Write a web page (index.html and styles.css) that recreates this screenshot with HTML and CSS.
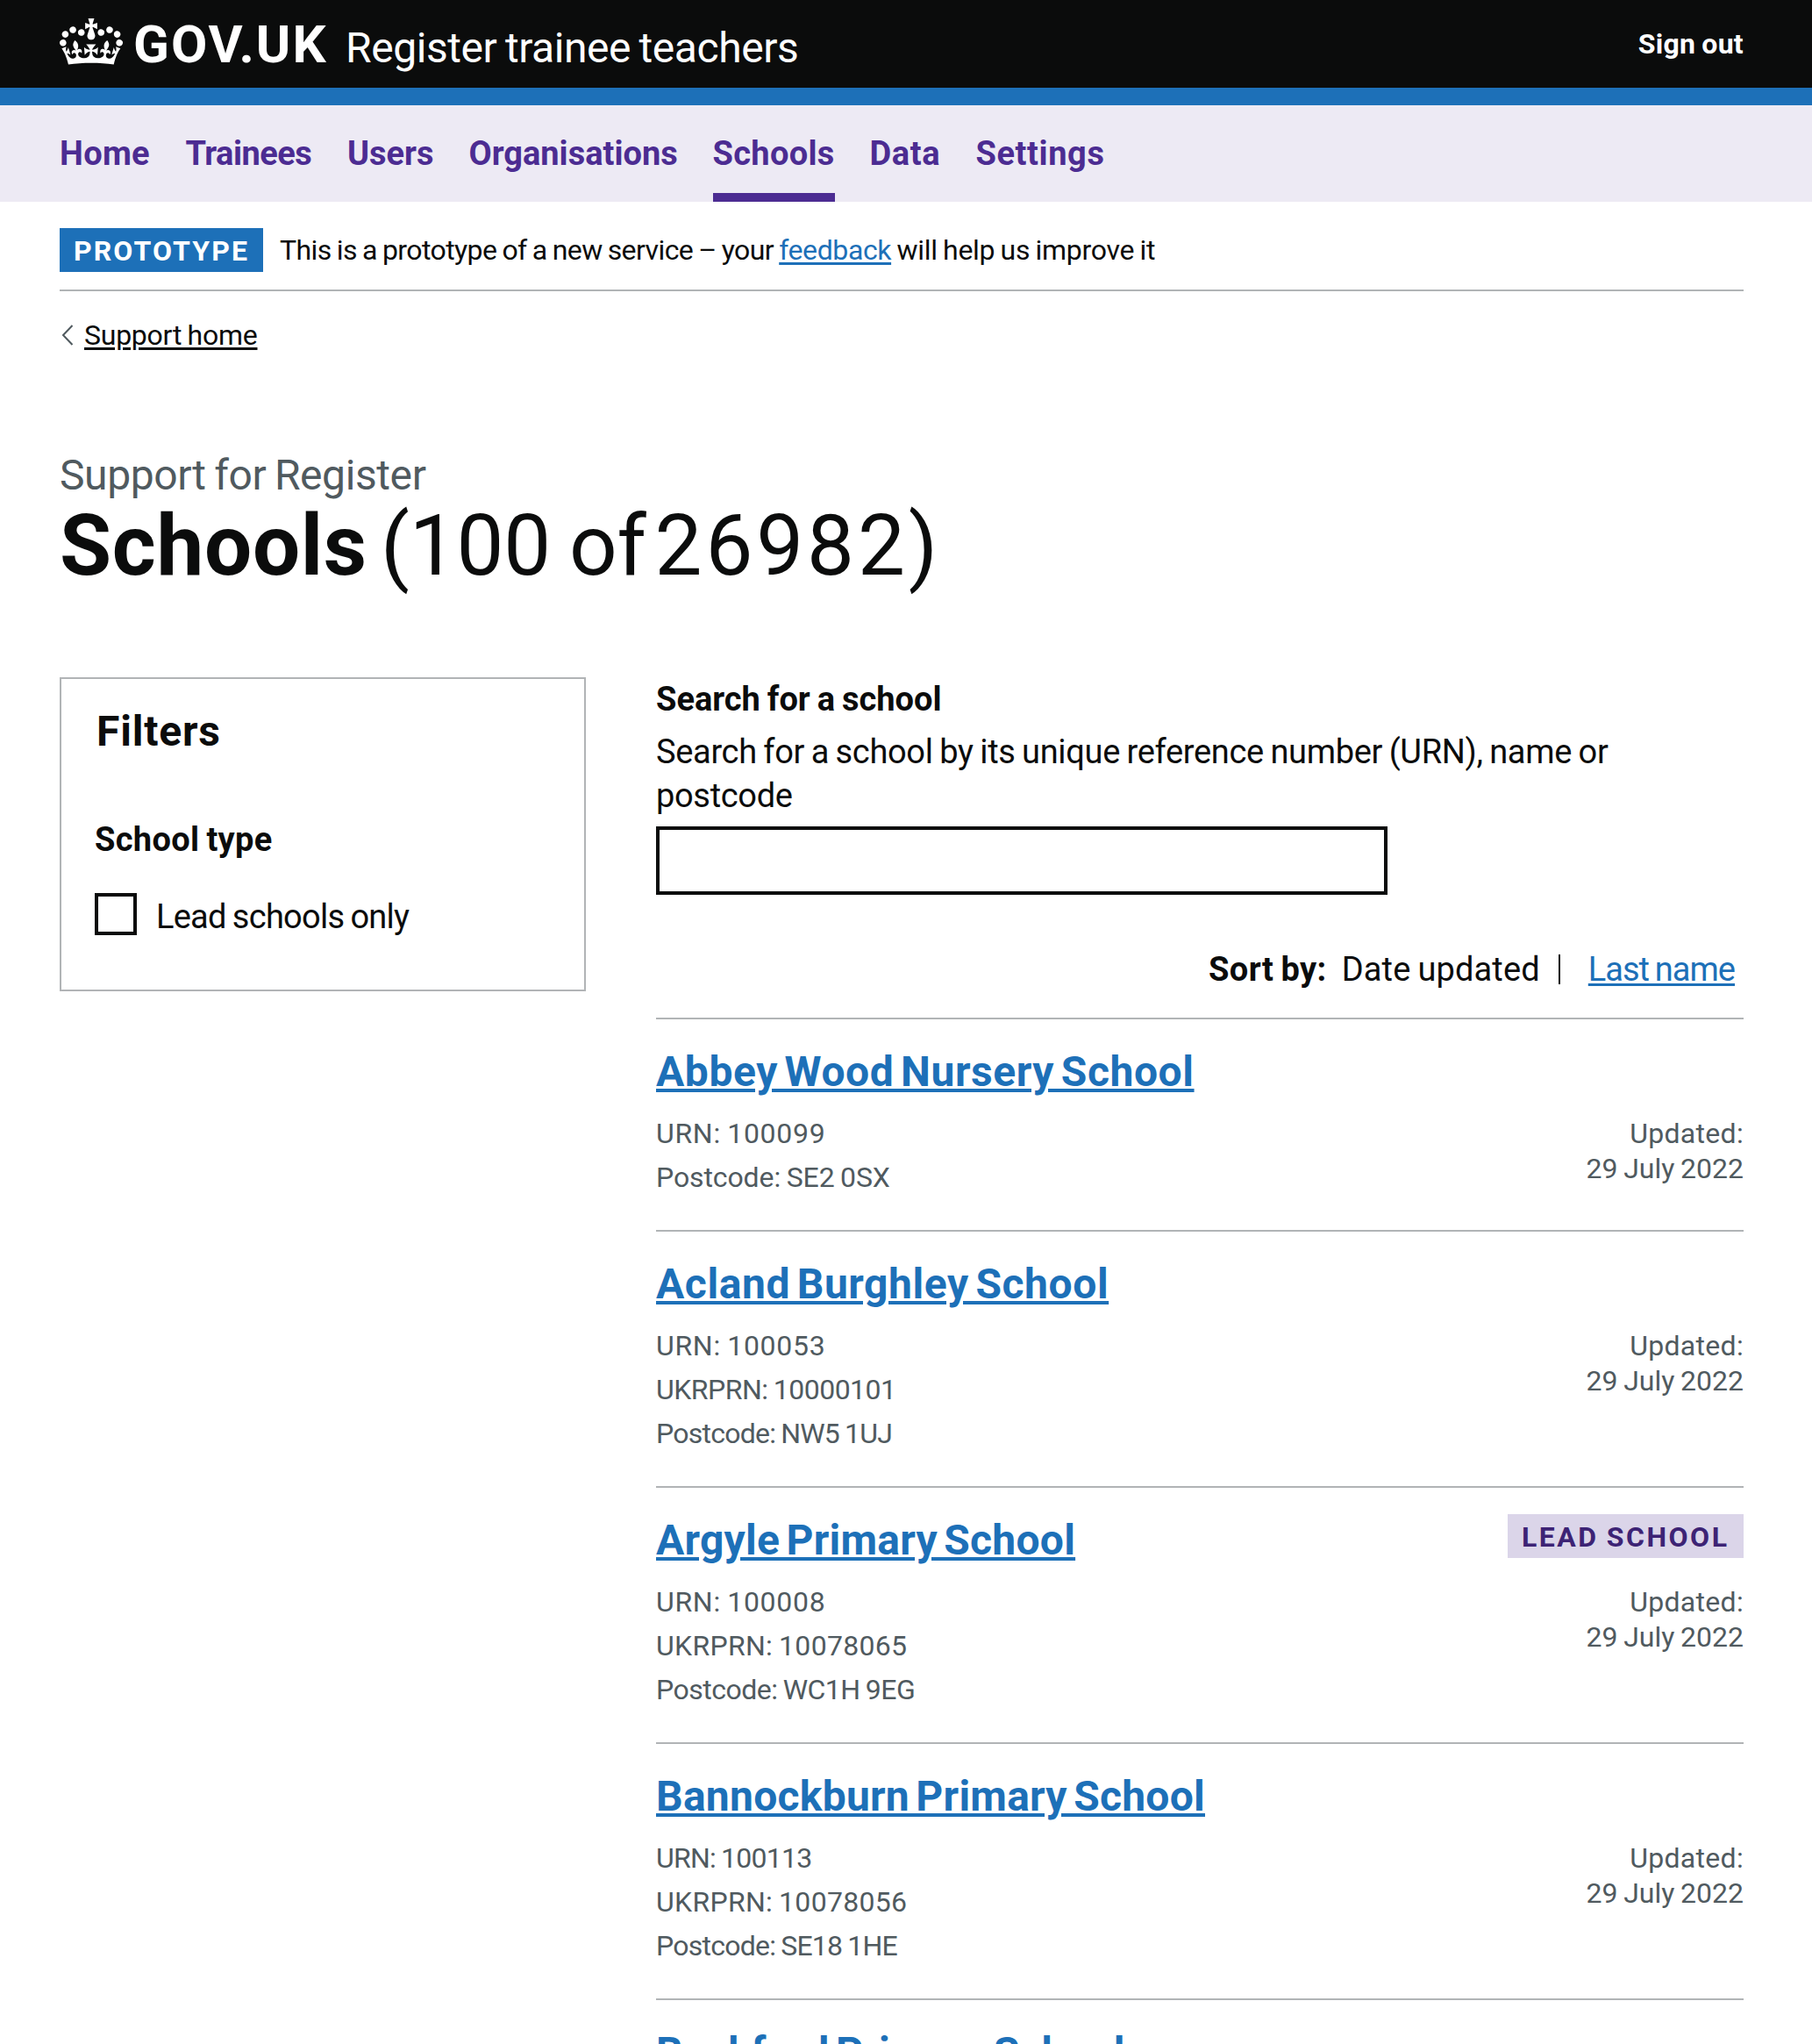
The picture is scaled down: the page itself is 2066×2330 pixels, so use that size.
FILE: index.html
```
<!DOCTYPE html>
<html lang="en">
<head>
<meta charset="utf-8">
<title>Schools - Register trainee teachers - GOV.UK</title>
<link rel="stylesheet" href="styles.css">
</head>
<body>
<header class="header">
  <div class="header-inner container">
    <svg class="crown" viewBox="0 0 132 97" aria-hidden="true"><path fill="currentColor" fill-rule="evenodd" d="M25 30.2c3.5 1.5 7.7-.2 9.1-3.7 1.5-3.6-.2-7.8-3.9-9.2-3.6-1.4-7.6.3-9.1 3.9-1.4 3.5.3 7.5 3.9 9zM9 39.5c3.6 1.5 7.8-.2 9.2-3.7 1.5-3.6-.2-7.8-3.9-9.1-3.6-1.5-7.6.2-9.1 3.8-1.4 3.5.3 7.5 3.8 9zM4.4 57.2c3.5 1.5 7.7-.2 9.1-3.8 1.5-3.6-.2-7.7-3.9-9.1-3.5-1.5-7.6.3-9.1 3.8-1.4 3.5.3 7.6 3.9 9.1zm38.3-21.4c3.5 1.5 7.7-.2 9.1-3.8 1.5-3.6-.2-7.7-3.9-9.1-3.6-1.5-7.6.3-9.1 3.8-1.3 3.6.4 7.7 3.9 9.1zm64.4-5.6c-3.6 1.5-7.8-.2-9.1-3.7-1.5-3.6.2-7.8 3.8-9.2 3.6-1.4 7.7.3 9.2 3.9 1.3 3.5-.4 7.5-3.9 9zm15.9 9.3c-3.6 1.5-7.7-.2-9.1-3.7-1.5-3.6.2-7.8 3.7-9.1 3.6-1.5 7.7.2 9.2 3.8 1.5 3.5-.3 7.5-3.8 9zm4.7 17.7c-3.6 1.5-7.8-.2-9.2-3.8-1.5-3.6.2-7.7 3.9-9.1 3.6-1.5 7.7.3 9.2 3.8 1.3 3.5-.4 7.6-3.9 9.1zM89.3 35.8c-3.6 1.5-7.8-.2-9.2-3.8-1.4-3.6.2-7.7 3.9-9.1 3.6-1.5 7.7.3 9.2 3.8 1.4 3.6-.3 7.7-3.9 9.1zM69.7 17.7l8.9 4.7V9.3l-8.9 2.8c-.2-.3-.5-.6-.9-.9L72.4 0H59.6l3.5 11.2c-.3.3-.6.5-.9.9l-8.8-2.8v13.1l8.8-4.7c.3.3.6.7.9.9l-5 15.4v.1c-.2.8-.4 1.6-.4 2.4 0 4.1 3.1 7.5 7 8.1h.2c.3 0 .7.1 1 .1.4 0 .7 0 1-.1h.2c4-.6 7.1-4.1 7.1-8.1 0-.8-.1-1.7-.4-2.4V34l-5.1-15.4c.4-.2.7-.6 1-.9zM66 92.8c16.9 0 32.8 1.1 47.1 3.2 4-16.9 8.9-26.7 14-33.5l-9.6-3.4c1 4.9 1.1 7.2 0 10.2-1.5-1.4-3-4.3-4.2-8.7L108.6 76c2.8-2 5-3.2 7.5-3.3-4.4 9.4-10 11.9-13.6 11.2-4.3-.8-6.3-4.6-5.6-7.9 1-4.7 5.7-5.9 8-.5 4.3-8.7-3-11.4-7.6-8.8 7.1-7.2 7.9-13.5 2.1-21.1-8 6.1-8.1 12.3-4.5 20.8-4.7-5.4-12.1-2.5-9.5 6.2 3.4-5.2 7.9-2 7.2 3.1-.6 4.3-6.4 7.8-13.5 7.2-10.3-.9-10.9-8-11.2-13.8 2.5-.5 7.1 1.8 11 7.3L80.2 60c-4.1 4.4-8 5.3-12.3 5.4 1.4-4.4 8-11.6 8-11.6H55.5s6.4 7.2 7.9 11.6c-4.2-.1-8-1-12.3-5.4l1.4 16.4c3.9-5.5 8.5-7.7 10.9-7.3-.3 5.8-.9 12.8-11.1 13.8-7.2.6-12.9-2.9-13.5-7.2-.7-5 3.8-8.3 7.1-3.1 2.7-8.7-4.6-11.6-9.4-6.2 3.7-8.5 3.6-14.7-4.6-20.8-5.8 7.6-5 13.9 2.2 21.1-4.7-2.6-11.9.1-7.7 8.8 2.3-5.5 7.1-4.2 8.1.5.7 3.3-1.3 7.1-5.7 7.9-3.5.7-9-1.8-13.5-11.2 2.5.1 4.7 1.3 7.5 3.3l-4.7-15.4c-1.2 4.4-2.7 7.2-4.3 8.7-1.1-3-.9-5.3 0-10.2l-9.5 3.4c5 6.9 9.9 16.7 14 33.5 14.8-2.1 30.8-3.2 47.7-3.2z"/></svg>
    <span class="logotype">GOV.UK</span>
    <span class="service">Register trainee teachers</span>
    <a class="signout">Sign out</a>
  </div>
</header>
<nav class="nav">
  <div class="nav-inner container">
    <a>Home</a><a class="tight">Trainees</a><a class="even">Users</a><a class="even">Organisations</a><a class="current">Schools</a><a class="loose">Data</a><a class="loose">Settings</a>
  </div>
</nav>
<div class="container">
  <div class="phase">
    <strong class="tag">PROTOTYPE</strong>
    <span class="phase-text">This is a prototype of a new service – your <a class="link feedback">feedback</a><span class="phase-end"> will help us improve it</span></span>
  </div>
  <div class="back">
    <svg class="chevron" viewBox="0 0 14 24" aria-hidden="true"><path d="M12.500 1 2 12l10.500 11" fill="none" stroke="#505a5f" stroke-width="2"/></svg>
    <a class="back-link">Support home</a>
  </div>
  <main>
    <div class="caption">Support for Register</div>
    <h1 class="title"><span>Schools</span><span class="count">(100 of <span class="total">26982)</span></span></h1>
    <div class="columns">
      <aside class="filters">
        <h2 class="filters-title">Filters</h2>
        <h3 class="filters-group">School type</h3>
        <label class="check"><span class="box"></span><span class="check-label">Lead schools only</span></label>
      </aside>
      <section class="results">
        <div class="search-label">Search for a school</div>
        <div class="hint">Search for a school by its unique reference number (URN), name or<br>postcode</div>
        <input class="search" type="text" aria-label="Search for a school">
        <div class="sort"><b class="sort-by">Sort by:</b><span class="sort-current">Date updated</span><span class="bar"></span><a class="link sort-link">Last name</a></div>

        <article class="school">
          <div><h2 class="name name-open"><a class="link">Abbey Wood Nursery School</a></h2>
            <div class="meta"><p class="urn">URN: 100099</p><p class="postcode">Postcode: SE2 0SX</p></div></div>
          <div class="side"><div class="status"></div><div>Updated:</div><div class="date">29 July 2022</div></div>
        </article>
        <article class="school">
          <div><h2 class="name name-open"><a class="link">Acland Burghley School</a></h2>
            <div class="meta"><p class="urn">URN: 100053</p><p class="ones">UKRPRN: 10000101</p><p class="postcode-tight">Postcode: NW5 1UJ</p></div></div>
          <div class="side"><div class="status"></div><div>Updated:</div><div class="date">29 July 2022</div></div>
        </article>
        <article class="school">
          <div><h2 class="name"><a class="link">Argyle Primary School</a></h2>
            <div class="meta"><p class="urn">URN: 100008</p><p>UKRPRN: 10078065</p><p class="ones">Postcode: WC1H 9EG</p></div></div>
          <div class="side"><div class="status"><strong class="tag tag-purple">LEAD SCHOOL</strong></div><div>Updated:</div><div class="date">29 July 2022</div></div>
        </article>
        <article class="school">
          <div><h2 class="name"><a class="link">Bannockburn Primary School</a></h2>
            <div class="meta"><p class="postcode-tight">URN: 100113</p><p>UKRPRN: 10078056</p><p class="postcode-tight">Postcode: SE18 1HE</p></div></div>
          <div class="side"><div class="status"></div><div>Updated:</div><div class="date">29 July 2022</div></div>
        </article>
        <article class="school">
          <div><h2 class="name"><a class="link">Beckford Primary School</a></h2></div>
          <div class="side"></div>
        </article>
      </section>
    </div>
  </main>
</div>
</body>
</html>
```
FILE: styles.css
```
* { box-sizing: border-box; word-spacing: -0.04em; }
html { background: #fff; }
body {
  margin: 0;
  height: 2330px;
  overflow: hidden;
  color: #0b0c0c;
  font: 400 38px/50px Roboto, "Liberation Sans", sans-serif;
}
h1, h2, h3, p { margin: 0; }
.container { margin: 0 78px 0 68px; }

.header { height: 120px; background: #0b0c0c; border-bottom: 20px solid #1d70b8; color: #fff; }
.header-inner { display: flex; align-items: baseline; padding-top: 21px; }
.crown { width: 72px; height: 53px; align-self: flex-start; margin-right: 12px; }
.logotype { width: 242px; font-size: 60px; line-height: 60px; font-weight: 700; letter-spacing: 2px; }
.service { font-size: 48px; line-height: 60px; letter-spacing: -0.44px; }
.signout { align-self: flex-start; margin: 9px 0 0 auto; font-size: 32px; line-height: 40px; font-weight: 700; letter-spacing: 0.3px; }

.nav { height: 110px; background: #edeaf4; }
.nav-inner {
  display: grid;
  grid-template-columns: 103.5px 144.5px 98.5px 238px 139px 81px 147px;
  column-gap: 40px;
  color: #4c2c92;
  font-weight: 700;
  letter-spacing: 0.3px;
}
.nav-inner a { height: 110px; padding-top: 30px; border-bottom: 10px solid transparent; white-space: nowrap; }
.nav-inner .current { border-bottom-color: #4c2c92; }
.nav-inner .tight { letter-spacing: -0.5px; }
.nav-inner .even { letter-spacing: 0; }
.nav-inner .loose { letter-spacing: 0.6px; }

.phase { display: flex; margin-top: 30px; padding-bottom: 20px; border-bottom: 2px solid #b1b4b6; }
.tag {
  display: block;
  width: 232px;
  height: 50px;
  padding: 1px 0 0 16px;
  background: #1d70b8;
  color: #fff;
  font-size: 32px;
  font-weight: 700;
  letter-spacing: 2.1px;
  white-space: nowrap;
}
.tag-purple { width: 269px; background: #dbd5e9; color: #3d2375; letter-spacing: 2.5px; text-align: left; }
.phase-text { margin-left: 19px; font-size: 32px; letter-spacing: -0.58px; }
.phase-text .feedback { letter-spacing: -0.4px; }
.phase-end { letter-spacing: -0.29px; }
.link { color: #1d70b8; text-decoration: underline; text-decoration-thickness: 3px; text-underline-offset: 3px; }

.back { display: flex; align-items: flex-start; margin-top: 30px; font-size: 32px; line-height: 40px; }
.chevron { width: 14px; height: 24px; margin: 8px 12px 0 2px; }
.back-link { letter-spacing: -0.25px; text-decoration: underline; text-decoration-thickness: 3px; text-underline-offset: 3px; }

.caption { margin-top: 110px; color: #505a5f; font-size: 48px; line-height: 60px; letter-spacing: -0.4px; }
.title { display: flex; font-size: 96px; line-height: 100px; letter-spacing: 0.7px; }
.count { margin-left: 15px; font-weight: 400; letter-spacing: -0.1px; word-spacing: -3px; }
.total { margin-left: -11px; letter-spacing: 3.9px; }

.columns { display: grid; grid-template-columns: 600px 1240px; column-gap: 80px; align-items: start; margin-top: 100px; }
.filters { height: 358px; padding: 30px 38px; border: 2px solid #b1b4b6; }
.filters-title { margin-left: 2px; font-size: 48px; line-height: 60px; letter-spacing: 0.8px; }
.filters-group { margin-top: 68px; font-size: 38px; letter-spacing: 0.3px; }
.check { display: flex; margin-top: 36px; }
.box { width: 48px; height: 48px; border: 4px solid #0b0c0c; }
.check-label { margin: 2px 0 0 22px; letter-spacing: -0.75px; }

.search-label { font-weight: 700; }
.hint { margin-top: 10px; letter-spacing: -0.33px; white-space: nowrap; }
.search { display: block; width: 834px; height: 78px; margin-top: 10px; border: 4px solid #0b0c0c; border-radius: 0; background: #fff; }
.sort { display: flex; justify-content: flex-end; margin: 60px 10px 30px 0; }
.sort-by { margin-right: 17px; letter-spacing: 0.4px; }
.sort-current { letter-spacing: 0.13px; }
.bar { width: 2px; height: 34px; margin: 8px 32px 0 21px; background: #0b0c0c; }
.sort-link { letter-spacing: -1px; }

.school { display: flex; justify-content: space-between; padding: 30px 0 35px; border-top: 2px solid #b1b4b6; }
.name { font-size: 48px; line-height: 60px; letter-spacing: 0.25px; }
.name-open { letter-spacing: 0.57px; }
.name .link { text-decoration-thickness: 4px; word-spacing: -0.1em; }
.meta { margin-top: 15px; color: #505a5f; font-size: 32px; letter-spacing: 0.3px; }
.meta .urn { letter-spacing: 0.7px; }
.meta .postcode { letter-spacing: -0.1px; }
.meta .ones { letter-spacing: -0.5px; }
.meta .postcode-tight { letter-spacing: -0.75px; }
.side { color: #505a5f; font-size: 32px; line-height: 40px; letter-spacing: 0.3px; text-align: right; }
.status { height: 50px; margin-bottom: 30px; line-height: 50px; }
.date { letter-spacing: 0; }
```
